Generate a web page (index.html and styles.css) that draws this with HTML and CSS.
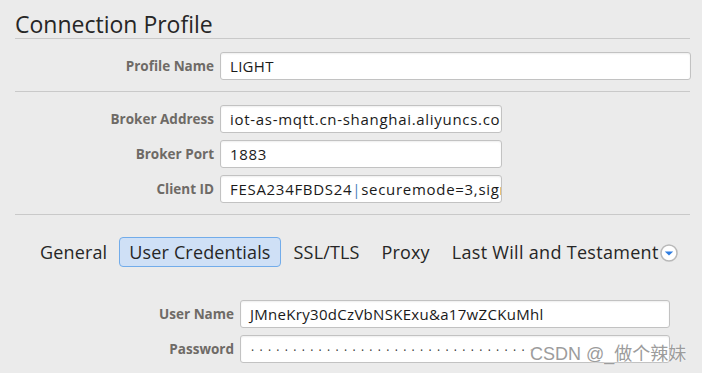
FILE: index.html
```html
<!DOCTYPE html>
<html>
<head>
<meta charset="utf-8">
<link rel="stylesheet" href="styles.css">
</head>
<body>
<div class="page">
  <h1 class="title">Connection Profile</h1>
  <div class="rule"></div>
  <div class="rows">
    <div class="row">
      <label class="lbl">Profile Name</label>
      <div class="field wide">LIGHT</div>
    </div>
  </div>
  <div class="rule"></div>
  <div class="rows">
    <div class="row">
      <label class="lbl">Broker Address</label>
      <div class="field mid">iot-as-mqtt.cn-shanghai.aliyuncs.com</div>
    </div>
    <div class="row">
      <label class="lbl">Broker Port</label>
      <div class="field mid">1883</div>
    </div>
    <div class="row">
      <label class="lbl">Client ID</label>
      <div class="field mid">FESA234FBDS24<span class="caret">|</span>securemode=3,signmethod=hmacsha1</div>
    </div>
  </div>
  <div class="rule"></div>
  <div class="tabs">
    <span class="tab">General</span>
    <span class="tab active">User Credentials</span>
    <span class="tab">SSL/TLS</span>
    <span class="tab">Proxy</span>
    <span class="tab last">Last Will and Testament</span>
    <span class="more">
      <svg width="18" height="18" viewBox="0 0 18 18">
        <circle cx="9" cy="9" r="8" fill="#ffffff" stroke="#b9b9b9" stroke-width="1.5"/>
        <path d="M4.8 7.4 L13.2 7.4 L9 11.6 Z" fill="#2f7de1"/>
      </svg>
    </span>
  </div>
  <div class="rows creds">
    <div class="row">
      <label class="lbl">User Name</label>
      <div class="field cred">JMneKry30dCzVbNSKExu&amp;a17wZCKuMhl</div>
    </div>
    <div class="row">
      <label class="lbl">Password</label>
      <div class="field cred dots">··································</div>
    </div>
  </div>
  <div class="watermark">CSDN @_做个辣妹</div>
</div>
</body>
</html>
```
FILE: styles.css
```css
html, body {
  margin: 0;
  padding: 0;
  background: #ebebeb;
}
.page {
  position: relative;
  width: 676px;
  height: 373px;
  padding: 0 11px 0 15px;
  font-family: "Open Sans", "DejaVu Sans", sans-serif;
  color: #222;
  overflow: hidden;
}
.title {
  margin: 0;
  padding-top: 10px;
  height: 28px;
  font-size: 23px;
  font-weight: 500;
  line-height: 28px;
  color: #262626;
}
.rule {
  height: 1px;
  background: #c9c9c9;
  width: 675px;
}
.rows {
  display: flex;
  flex-direction: column;
  gap: 7px;
  padding: 13px 0 11px;
}
.row {
  display: flex;
  align-items: center;
  gap: 6px;
}
.lbl {
  width: 199px;
  text-align: right;
  font-size: 13.5px;
  font-weight: 700;
  color: #6e6a66;
}
.field {
  box-sizing: border-box;
  height: 28px;
  background: #fff;
  border: 1px solid #c2c2c2;
  border-radius: 3px;
  box-shadow: inset 0 1px 2px rgba(0,0,0,0.07);
  font-size: 15px;
  letter-spacing: 0.3px;
  line-height: 26px;
  padding: 0 9px;
  color: #1a1a1a;
  white-space: nowrap;
  overflow: hidden;
}
.mid { letter-spacing: 0.7px; }
.wide { width: 471px; }
.mid { width: 282px; }
.caret { color: #4a7fc0; }
.tabs {
  display: flex;
  align-items: center;
  height: 30px;
  margin-top: 22px;
  padding-left: 14px;
}
.tab {
  box-sizing: border-box;
  height: 30px;
  line-height: 28px;
  font-size: 18px;
  letter-spacing: 0.15px;
  color: #262626;
  padding: 0 10px;
  border: 1px solid transparent;
  border-radius: 4px;
}
.tab.active {
  background: #cfe0f6;
  border-color: #72acea;
  margin: 0 2px 0 1px;
  padding: 0 9px;
}
.tab.last {
  padding-right: 0;
  letter-spacing: 0.3px;
}
.more {
  display: flex;
  margin-top: 2px;
}
.creds {
  padding-top: 33px;
}
.creds .lbl {
  width: 219px;
}
.cred { width: 430px; }
.dots {
  color: #333;
  font-size: 12px;
  letter-spacing: 5.3px;
  line-height: 30px;
  padding-left: 10px;
}
.watermark {
  position: absolute;
  left: 530px;
  top: 339px;
  font-family: "Liberation Sans", "Noto Sans CJK SC", sans-serif;
  font-size: 18px;
  color: #9c9c9c;
  text-shadow: 0 0 2px #fff, 0 0 1px #fff;
  white-space: nowrap;
}
```
